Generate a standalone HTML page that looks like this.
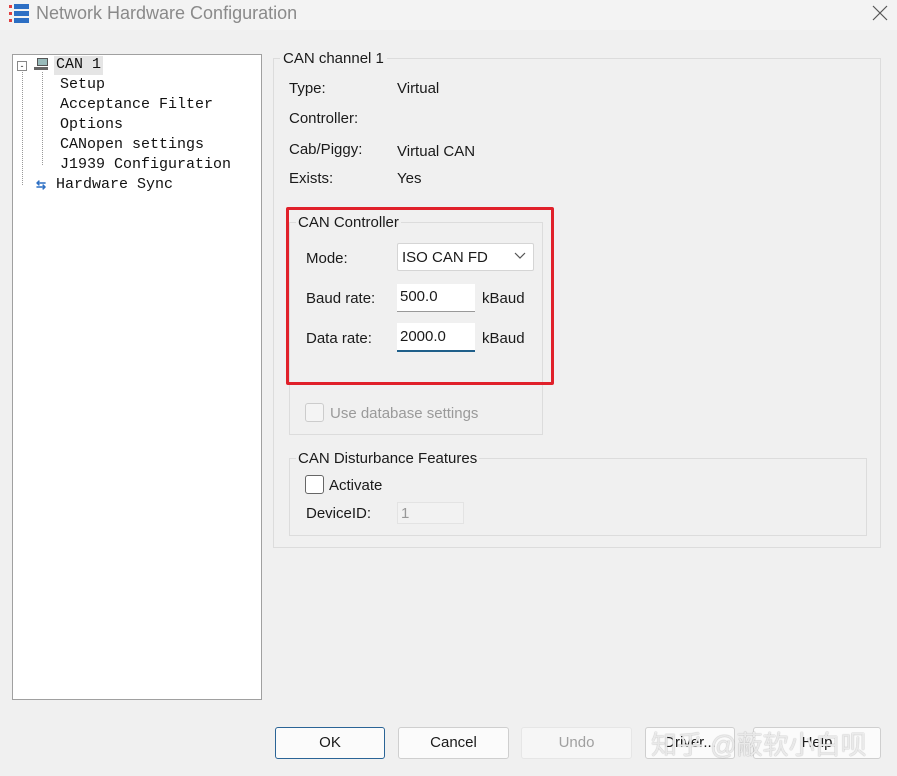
<!DOCTYPE html>
<html><head><style>
body{margin:0;width:897px;height:776px;background:#f0f0f0;position:relative;overflow:hidden;font-family:"Liberation Sans",sans-serif;font-size:15px;color:#1a1a1a}
.a{position:absolute;white-space:nowrap}
.mono{font-family:"Liberation Mono",monospace;font-size:15px;color:#111}
.grp{position:absolute;border:1px solid #dcdcdc}
.btn{position:absolute;top:727px;height:30px;background:#fbfbfb;border:1px solid #cfcfcf;border-radius:3px;text-align:center;line-height:30px;font-size:15px}
.inp{position:absolute;background:#fff;border-bottom:1px solid #999}
</style></head><body>
<div class="a" style="left:0;top:0;width:897px;height:30px;background:#f3f3f3"></div>
<svg class="a" style="left:8px;top:3px" width="24" height="22"><rect x="6" y="1" width="15" height="5" fill="#2d6fc4"/><rect x="6" y="8" width="15" height="5" fill="#2d6fc4"/><rect x="6" y="15" width="15" height="5" fill="#2d6fc4"/><rect x="1" y="2" width="3" height="3" fill="#e04040"/><rect x="1" y="9" width="3" height="3" fill="#e04040"/><rect x="1" y="16" width="3" height="3" fill="#e04040"/></svg>
<div class="a" style="left:36px;top:3px;font-size:18px;color:#8a8a8a">Network Hardware Configuration</div>
<svg class="a" style="left:872px;top:5px" width="16" height="16"><path d="M1 1 L15 15 M15 1 L1 15" stroke="#555" stroke-width="1.2"/></svg>

<div class="a" style="left:12px;top:54px;width:248px;height:644px;background:#fff;border:1px solid #a0a0a0"></div>
<div class="a" style="left:17px;top:61px;width:8px;height:8px;border:1px solid #888;font-size:9px;line-height:8px;text-align:center">-</div>
<svg class="a" style="left:33px;top:57px" width="18" height="16"><rect x="4" y="1" width="11" height="8" fill="#555"/><rect x="5" y="2" width="9" height="6" fill="#9bb"/><rect x="1" y="10" width="14" height="3" fill="#666"/></svg>
<div class="a" style="left:22px;top:72px;height:113px;border-left:1px dotted #999"></div>
<div class="a" style="left:42px;top:72px;height:93px;border-left:1px dotted #999"></div>
<div class="a" style="left:54px;top:56px;width:49px;height:19px;background:#e5e5e5"></div>
<div class="a mono" style="left:56px;top:56px">CAN 1</div>
<div class="a mono" style="left:60px;top:76px">Setup</div>
<div class="a mono" style="left:60px;top:96px">Acceptance Filter</div>
<div class="a mono" style="left:60px;top:116px">Options</div>
<div class="a mono" style="left:60px;top:136px">CANopen settings</div>
<div class="a mono" style="left:60px;top:156px">J1939 Configuration</div>
<div class="a" style="left:36px;top:178px;color:#2d6fc4;font-size:12px;font-weight:bold">⇆</div>
<div class="a mono" style="left:56px;top:176px">Hardware Sync</div>

<div class="grp" style="left:273px;top:58px;width:606px;height:488px"></div>
<div class="a" style="left:280px;top:50px;background:#f0f0f0;padding:0 3px">CAN channel 1</div>
<div class="a" style="left:289px;top:80px">Type:</div><div class="a" style="left:397px;top:80px">Virtual</div>
<div class="a" style="left:289px;top:110px">Controller:</div>
<div class="a" style="left:289px;top:141px">Cab/Piggy:</div><div class="a" style="left:397px;top:143px">Virtual CAN</div>
<div class="a" style="left:289px;top:170px">Exists:</div><div class="a" style="left:397px;top:170px">Yes</div>

<div class="grp" style="left:289px;top:222px;width:252px;height:211px"></div>
<div class="a" style="left:296px;top:214px;background:#f0f0f0;padding:0 2px">CAN Controller</div>
<div class="a" style="left:306px;top:250px">Mode:</div>
<div class="a" style="left:397px;top:243px;width:135px;height:26px;background:#fff;border:1px solid #d5d5d5;border-radius:2px"></div>
<div class="a" style="left:402px;top:249px">ISO CAN FD</div>
<svg class="a" style="left:514px;top:252px" width="12" height="8"><path d="M1 1 L6 6 L11 1" fill="none" stroke="#555" stroke-width="1.2"/></svg>
<div class="a" style="left:306px;top:290px">Baud rate:</div>
<div class="inp" style="left:397px;top:284px;width:78px;height:27px"></div>
<div class="a" style="left:400px;top:288px">500.0</div>
<div class="a" style="left:482px;top:290px">kBaud</div>
<div class="a" style="left:306px;top:330px">Data rate:</div>
<div class="inp" style="left:397px;top:323px;width:78px;height:27px;border-bottom:2px solid #1f5f8a"></div>
<div class="a" style="left:400px;top:328px">2000.0</div>
<div class="a" style="left:482px;top:330px">kBaud</div>
<div class="a" style="left:286px;top:207px;width:262px;height:172px;border:3px solid #e0202a;border-radius:2px"></div>
<div class="a" style="left:305px;top:403px;width:17px;height:17px;border:1px solid #ccc;border-radius:3px;background:#f4f4f4"></div>
<div class="a" style="left:330px;top:405px;color:#9a9a9a">Use database settings</div>

<div class="grp" style="left:289px;top:458px;width:576px;height:76px"></div>
<div class="a" style="left:296px;top:450px;background:#f0f0f0;padding:0 2px">CAN Disturbance Features</div>
<div class="a" style="left:305px;top:475px;width:17px;height:17px;border:1px solid #666;border-radius:3px;background:#fff"></div>
<div class="a" style="left:329px;top:477px">Activate</div>
<div class="a" style="left:306px;top:505px">DeviceID:</div>
<div class="a" style="left:397px;top:502px;width:65px;height:20px;border:1px solid #e3e3e3;background:#f2f2f2"></div>
<div class="a" style="left:401px;top:505px;color:#999">1</div>

<div class="btn" style="left:275px;width:108px;border-color:#2a6496">OK</div>
<div class="btn" style="left:398px;width:109px">Cancel</div>
<div class="btn" style="left:521px;width:109px;color:#a0a0a0;background:#f6f6f6;border-color:#e6e6e6">Undo</div>
<div class="btn" style="left:645px;width:88px">Driver...</div>
<div class="btn" style="left:753px;width:126px">Help</div>
<div class="a" style="left:651px;top:725px;font-size:26px;color:rgba(255,255,255,0.8);font-family:'Liberation Sans','Noto Sans CJK SC',sans-serif;text-shadow:0 0 1px #888">知乎 @蔽软小白呗</div>
</body></html>
